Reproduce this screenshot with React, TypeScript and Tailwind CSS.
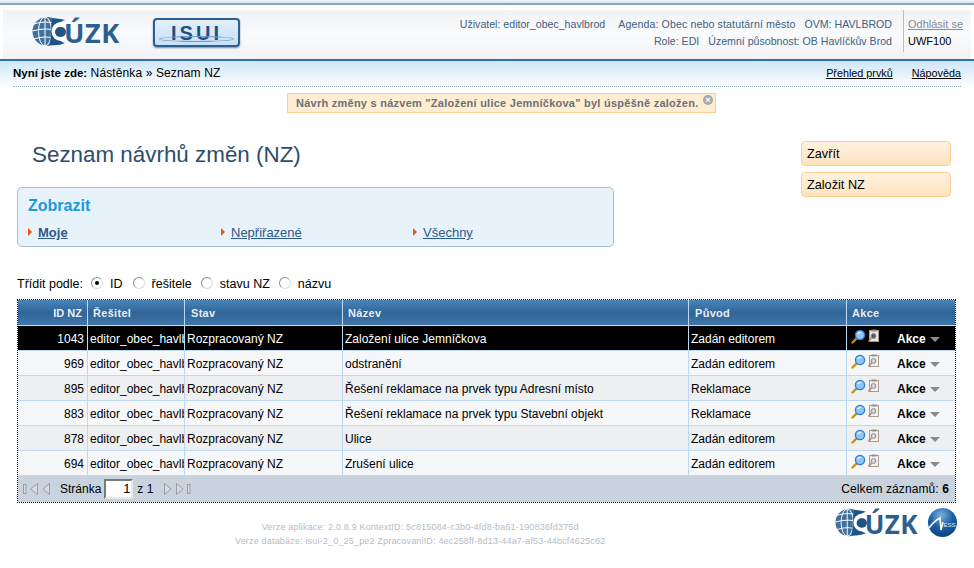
const rows = [
  { id: "1043", nazev: "Založení ulice Jemníčkova", puvod: "Zadán editorem" },
  { id: "969", nazev: "odstranění", puvod: "Zadán editorem" },
  { id: "895", nazev: "Řešení reklamace na prvek typu Adresní místo", puvod: "Reklamace" },
  { id: "883", nazev: "Řešení reklamace na prvek typu Stavební objekt", puvod: "Reklamace" },
  { id: "878", nazev: "Ulice", puvod: "Zadán editorem" },
  { id: "694", nazev: "Zrušení ulice", puvod: "Zadán editorem" },
];

function CuzkLogo({ small }: { small?: boolean }) {
  return (
    <div className="flex items-center text-[#2a5f8f]">
      <svg width={small ? 32 : 34} height="29" viewBox="0 0 34 29" className="shrink-0">
        <circle cx="15" cy="14.5" r="14.5" fill="#3f719f" />
        <g stroke="#fff" strokeWidth="1" fill="none">
          <ellipse cx="13" cy="14.5" rx="6.5" ry="14.5" />
          <path d="M2 7 Q13 3 26 7" />
          <path d="M0.5 14 Q13 10 28 14" />
          <path d="M2 22 Q13 18 26 22" />
          <path d="M13 0 V29" />
        </g>
        <path d="M20 1 Q30 2 33 3 Q25 5 24 14 Q25 24 33 26 Q27 29 18 28 Z" fill="#1f5484" />
        <circle cx="29" cy="14.5" r="9.5" fill="#fff" />
        <rect x="23" y="10" width="11" height="10" rx="5" fill="#1f5484" />
      </svg>
      <span className={small ? "-ml-[2px] pt-[3px] text-[26px] leading-none font-bold tracking-[0.4px] font-['Open_Sans',sans-serif]" : "-ml-[2px] pt-[3px] text-[27px] leading-none font-bold tracking-[0.6px] font-['Open_Sans',sans-serif]"}>ÚZK</span>
    </div>
  );
}

function IsuiLogo() {
  return (
    <div className="relative flex h-[29px] w-[87px] items-start justify-center rounded-[4px] border-2 border-[#2a5f8f] bg-gradient-to-b from-[#e3effb] to-[#c8dff6] pt-[3px] shadow-[0_1px_2px_#6f8fad]">
      <span className="text-[20px] leading-none font-bold tracking-[3px] text-[#1f4f80] font-['Liberation_Sans',sans-serif]">ISUI</span>
      <span className="absolute bottom-[3px] left-[4px] h-[6px] w-[75px] rounded-[50%] border border-[#6f9cc6]" />
    </div>
  );
}

function NessLogo() {
  return (
    <svg width="29" height="29" viewBox="0 0 29 29">
      <defs>
        <radialGradient id="ness" cx="45%" cy="25%" r="80%">
          <stop offset="0%" stopColor="#7fb0dc" />
          <stop offset="50%" stopColor="#1b61a8" />
          <stop offset="100%" stopColor="#0d3f7c" />
        </radialGradient>
      </defs>
      <circle cx="14.5" cy="14.5" r="14.5" fill="url(#ness)" />
      <path d="M1 20 Q6 13 12 10 L13 22 L15 14" fill="none" stroke="#fff" strokeWidth="1.6" />
      <text x="15.5" y="19" fontSize="6" fontFamily="Liberation Sans, sans-serif" fill="#dfeaf5">ESS</text>
    </svg>
  );
}

function Arrow() {
  return <span className="mt-[3px] mr-[6px] inline-block h-0 w-0 self-start border-y-[4px] border-l-[4px] border-y-transparent border-l-[#e8590c]" />;
}

function Radio({ checked }: { checked?: boolean }) {
  return (
    <span className="-mt-[3px] flex h-[12px] w-[12px] items-center justify-center rounded-full border border-[#8f8f8f] border-r-[#dcdcdc] border-b-[#dcdcdc] bg-white">
      {checked && <span className="h-[4px] w-[4px] rounded-full bg-black" />}
    </span>
  );
}

function Magnifier() {
  return (
    <svg width="15" height="15" viewBox="0 0 15 15">
      <path d="M5.5 9.5 L1.5 13.5" stroke="#c8920f" strokeWidth="2.4" strokeLinecap="round" />
      <circle cx="9" cy="6" r="4.6" fill="#8cc6f7" stroke="#2e7bd0" strokeWidth="1.3" />
      <path d="M6.8 5 Q8 3.3 10 3.5" stroke="#fff" strokeWidth="1.2" fill="none" />
    </svg>
  );
}

function Clipboard({ dark }: { dark?: boolean }) {
  return (
    <svg width="13" height="14" viewBox="0 0 13 14">
      <rect x="2.5" y="1.5" width="9" height="11" fill={dark ? "#e4e4e4" : "#f4f2ee"} stroke="#a99a8c" />
      <rect x="4.5" y="0.5" width="5" height="2" fill="#8f8f8f" />
      <circle cx="6.5" cy="7" r="2.4" fill={dark ? "#555" : "#d8d8d8"} stroke="#8a8a8a" />
      <path d="M4.5 9 L1.5 12.5" stroke="#b5776a" strokeWidth="1.2" />
    </svg>
  );
}

function PagerIcon({ dir, bar }: { dir: "l" | "r"; bar?: boolean }) {
  return (
    <svg width={bar ? 16 : 9} height="12" viewBox={bar ? "0 0 16 12" : "0 0 9 12"}>
      {dir === "l" ? (
        <g fill="#d6dbe1" stroke="#979da5">
          {bar && <rect x="0.5" y="1.5" width="2.5" height="9" />}
          <path d={bar ? "M14.5 0.5 V11.5 L7.5 6 Z" : "M7.5 0.5 V11.5 L1 6 Z"} />
        </g>
      ) : (
        <g fill="#d6dbe1" stroke="#979da5">
          <path d="M1.5 0.5 V11.5 L8 6 Z" />
          {bar && <rect x="12.5" y="1.5" width="2.5" height="9" />}
        </g>
      )}
    </svg>
  );
}

export default function App() {
  return (
    <div className="h-[568px] w-[974px] overflow-hidden bg-white font-['Liberation_Sans',Arial,sans-serif] text-[12px] text-black">
      {/* Header */}
      <div className="h-[5px] border-b-2 border-[#7fa9c9] bg-gradient-to-b from-[#f2f6fa] to-[#d8e5ef]" />
      <div className="h-[5px]" />
      <div className="mx-[3px] flex h-[49px] items-stretch bg-gradient-to-b from-[#f0f2f5] via-[#fafbfc] to-[#f0f2f5]">
        <div className="flex items-start pt-[6px]">
          <div className="ml-[29px] w-[121px]"><CuzkLogo /></div>
          <div className="mt-[2px]"><IsuiLogo /></div>
        </div>
        <div className="ml-auto flex">
          <div className="flex flex-col items-end pt-[6px] pr-[11px] text-[10.6px] leading-[17px] text-[#3f6183]">
            <div className="flex">
              <span>Uživatel: editor_obec_havlbrod</span>
              <span className="ml-[13px] tracking-[0.12px]">Agenda: Obec nebo statutární město</span>
              <span className="ml-[9px]">OVM: HAVLBROD</span>
            </div>
            <div className="flex gap-[9px]">
              <span>Role: EDI</span>
              <span>Územní působnost: OB Havlíčkův Brod</span>
            </div>
          </div>
          <div className="mb-[7px] w-[68px] border-l border-[#a9c8b8] pt-[6px] pl-[4px] text-[11px] leading-[17px]">
            <div className="text-[#8a8a8a] underline">Odhlásit se</div>
            <div className="text-black">UWF100</div>
          </div>
        </div>
      </div>
      <div className="h-[2px] bg-[#336f9f]" />
      {/* Breadcrumb */}
      <div className="h-[27px] bg-gradient-to-b from-[#cfe6f8] to-white px-[13px]">
        <div className="flex h-[26px] items-center justify-between border-b border-dotted border-[#8fb0c8]">
          <div className="tracking-[0.12px]">
            <b className="text-[11.5px] tracking-normal">Nyní jste zde:</b> Nástěnka » Seznam NZ
          </div>
          <div className="flex gap-[19px] text-[10.8px] underline">
            <span>Přehled prvků</span>
            <span>Nápověda</span>
          </div>
        </div>
      </div>
      {/* Notice */}
      <div className="mt-[5px] ml-[287px]">
        <div className="relative flex h-[20px] w-[429px] items-center border border-[#fbd08f] bg-[#fdedd3] pl-[8px] text-[11px] font-bold tracking-[0.25px] text-[#6f7074]">
          Návrh změny s názvem "Založení ulice Jemníčkova" byl úspěšně založen.
          <span className="absolute top-[1px] right-[2px] flex h-[10px] w-[10px] items-center justify-center rounded-full bg-[#a8a8a8] text-[9px] leading-none text-white">×</span>
        </div>
      </div>
      {/* Title and actions */}
      <div className="mt-[28px] flex items-start pr-[23px] pl-[17px]">
        <div className="w-[597px]">
          <h1 className="ml-[15px] h-[46px] text-[22.4px] leading-[28px] font-normal text-[#2d4d6e]">Seznam návrhů změn (NZ)</h1>
          <div className="h-[60px] rounded-[5px] border border-[#a5bfd2] bg-[#e8f2fb] pt-[8px] pl-[10px]">
            <div className="text-[16px] leading-[19px] font-bold text-[#1a9ad6]">Zobrazit</div>
            <div className="mt-[10px] flex text-[13px] leading-[15px] text-[#2a5a8c] underline">
              <span className="flex w-[192px]"><Arrow /><b>Moje</b></span>
              <span className="ml-[1px] flex w-[192px]"><Arrow />Nepřiřazené</span>
              <span className="flex"><Arrow />Všechny</span>
            </div>
          </div>
        </div>
        <div className="ml-auto flex w-[150px] flex-col gap-[6px] text-[12.7px]">
          <div className="flex h-[25px] items-center rounded-[4px] border border-[#fdd08f] bg-gradient-to-b from-[#fff2e0] to-[#fee3bf] pt-[2px] pl-[5px]">Zavřít</div>
          <div className="flex h-[25px] items-center rounded-[4px] border border-[#fdd08f] bg-gradient-to-b from-[#fff2e0] to-[#fee3bf] pt-[2px] pl-[5px]">Založit NZ</div>
        </div>
      </div>
      {/* Sort */}
      <div className="mt-[30px] ml-[17px] flex h-[15px] items-center text-[12.5px] leading-[15px]">
        <span className="mr-[8px]">Třídit podle:</span>
        <Radio checked /><span className="mr-[10px] ml-[7px]">ID</span>
        <Radio /><span className="mr-[9px] ml-[7px]">řešitele</span>
        <Radio /><span className="mr-[9px] ml-[7px]">stavu NZ</span>
        <Radio /><span className="ml-[7px]">názvu</span>
      </div>
      {/* Table */}
      <div className="mt-[7px] ml-[17px] w-[939px] border border-dotted border-black">
        <table className="w-full table-fixed border-separate border-spacing-0">
          <colgroup>
            <col className="w-[70px]" />
            <col className="w-[97px]" />
            <col className="w-[158px]" />
            <col className="w-[346px]" />
            <col className="w-[158px]" />
            <col />
          </colgroup>
          <thead>
            <tr className="h-[26px] bg-gradient-to-b from-[#4a85bb] via-[#2f6496] to-[#4279ad] text-[11px] tracking-[0.3px] text-[#e8eef5]">
              <th className="border-r border-b border-[#bcd8f2] pt-[2px] pr-[5px] text-right font-bold tracking-normal">ID NZ</th>
              <th className="border-r border-b border-[#bcd8f2] pt-[2px] pl-[5px] text-left font-bold">Řešitel</th>
              <th className="border-r border-b border-[#bcd8f2] pt-[2px] pl-[6px] text-left font-bold">Stav</th>
              <th className="border-r border-b border-[#bcd8f2] pt-[2px] pl-[5px] text-left font-bold">Název</th>
              <th className="border-r border-b border-[#bcd8f2] pt-[2px] pl-[6px] text-left font-bold">Původ</th>
              <th className="border-b border-[#bcd8f2] pt-[2px] pl-[5px] text-left font-bold">Akce</th>
            </tr>
          </thead>
          <tbody>
            {rows.map((r, i) => {
              const sel = i === 0;
              const rowCls = sel ? "bg-black text-white" : i % 2 === 1 ? "bg-[#f5f7f8]" : "bg-[#eeeff0]";
              return (
                <tr key={r.id} className={`h-[25px] ${rowCls}`}>
                  <td className="border-r border-b border-[#bcd8f2] pt-[2px] pr-[3px] text-right">{r.id}</td>
                  <td className="border-r border-b border-[#bcd8f2] pt-[2px] pl-[2px]"><div className="overflow-hidden whitespace-nowrap">editor_obec_havlbrod</div></td>
                  <td className="border-r border-b border-[#bcd8f2] pt-[2px] pl-[2px]">Rozpracovaný NZ</td>
                  <td className="border-r border-b border-[#bcd8f2] pt-[2px] pl-[2px]">{r.nazev}</td>
                  <td className="border-r border-b border-[#bcd8f2] pt-[2px] pl-[2px]">{r.puvod}</td>
                  <td className="border-b border-[#bcd8f2] pt-[2px] pl-[4px]">
                    <div className="flex items-center">
                      <div className="-mt-[6px] flex w-[46px] items-center gap-[1px]"><Magnifier /><Clipboard dark={sel} /></div>
                      <b>Akce</b>
                      <span className="mt-[1px] ml-[4px] h-0 w-0 border-x-[5px] border-t-[5px] border-x-transparent border-t-[#8a8a8a]" />
                    </div>
                  </td>
                </tr>
              );
            })}
          </tbody>
        </table>
        <div className="flex h-[26px] items-center bg-[#c9d3de] pr-[6px] pl-[5px]">
          <PagerIcon dir="l" bar />
          <span className="ml-[3px]"><PagerIcon dir="l" /></span>
          <span className="mr-[3px] ml-[9px]">Stránka</span>
          <div className="flex h-[20px] w-[29px] items-center justify-end border-2 border-[#7a7a7a] border-r-[#e8e8e8] border-b-[#e8e8e8] bg-white pr-[1px] text-[13px]">1</div>
          <span className="ml-[4px]">z 1</span>
          <span className="ml-[10px]"><PagerIcon dir="r" /></span>
          <span className="ml-[3px]"><PagerIcon dir="r" bar /></span>
          <span className="ml-auto tracking-[0.1px]">Celkem záznamů: <b>6</b></span>
        </div>
      </div>
      {/* Footer */}
      <div className="mt-[5px] flex items-start justify-between">
        <div className="ml-[235px] pt-[12px] text-center text-[9px] leading-[14px] tracking-[0.18px] text-[#b4bcc6]">
          <div>Verze aplikace: 2.0.8.9 KontextID: 5c815084-c3b0-4fd8-ba61-190836fd375d</div>
          <div>Verze databáze: isui-2_0_25_pe2 ZpracovaniID: 4ec258ff-8d13-44a7-af53-44bcf4625c62</div>
        </div>
        <div className="mr-[17px] flex items-center gap-[10px]">
          <CuzkLogo small />
          <NessLogo />
        </div>
      </div>
    </div>
  );
}
